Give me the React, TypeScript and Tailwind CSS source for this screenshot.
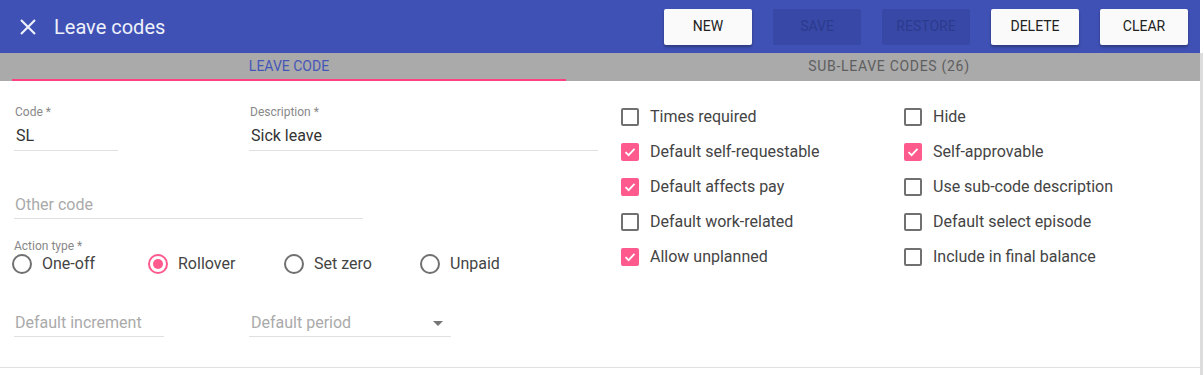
import React from "react";

const font = { fontFamily: "Roboto, 'Noto Sans', sans-serif" };

function Checkbox({ checked, label }: { checked?: boolean; label: string }) {
  return (
    <div className="flex items-center h-[35px]">
      {checked ? (
        <div className="w-[18px] h-[18px] rounded-[2px] bg-[#ff5a8e] flex items-center justify-center">
          <svg width="14" height="14" viewBox="0 0 14 14">
            <path d="M2.5 7.2 L5.6 10.2 L11.5 3.8" fill="none" stroke="#ffffff" strokeWidth="1.8" />
          </svg>
        </div>
      ) : (
        <div className="w-[18px] h-[18px] rounded-[2px] border-2 border-[#707070] bg-white" />
      )}
      <span className="ml-[11px] text-[16px] leading-[20px] text-[#444444]">{label}</span>
    </div>
  );
}

function Radio({ checked, label }: { checked?: boolean; label: string }) {
  return (
    <div className="flex items-center w-[136px] h-[20px]">
      {checked ? (
        <div className="w-[20px] h-[20px] rounded-full border-2 border-[#ff5a8e] flex items-center justify-center">
          <div className="w-[10px] h-[10px] rounded-full bg-[#ff5a8e]" />
        </div>
      ) : (
        <div className="w-[20px] h-[20px] rounded-full border-2 border-[#707070]" />
      )}
      <span className="ml-[10px] text-[16px] leading-[20px] text-[#444444]">{label}</span>
    </div>
  );
}

function Btn({ label, disabled }: { label: string; disabled?: boolean }) {
  return (
    <div
      className={
        disabled
          ? "w-[88px] h-[36px] rounded-[2px] bg-[#3848a6] text-[#2c3b8e] flex items-center justify-center text-[14px]"
          : "w-[88px] h-[36px] rounded-[2px] bg-[#fafafa] text-[#212121] flex items-center justify-center text-[14px] shadow-[0_2px_3px_rgba(0,0,0,0.3)]"
      }
    >
      {label}
    </div>
  );
}

export default function App() {
  return (
    <div className="w-[1204px] h-[375px] bg-white flex overflow-hidden" style={font}>
      <div className="w-[1200px] flex flex-col">
        {/* Header */}
        <div className="h-[53px] bg-[#3f51b5] flex items-center">
          <svg className="ml-[20px]" width="16" height="16" viewBox="0 0 16 16">
            <path d="M1 1 L15 15 M15 1 L1 15" stroke="#eef0fa" strokeWidth="2.2" />
          </svg>
          <span className="ml-[18px] text-[20px] leading-[24px] text-[#eef0fa]">Leave codes</span>
          <div className="ml-auto mr-[12px] flex gap-[21px]">
            <Btn label="NEW" />
            <Btn label="SAVE" disabled />
            <Btn label="RESTORE" disabled />
            <Btn label="DELETE" />
            <Btn label="CLEAR" />
          </div>
        </div>
        {/* Tabs */}
        <div className="h-[28px] bg-[#aaaaaa] flex pl-[12px] overflow-hidden">
          <div className="w-[554px] shrink-0 h-full flex items-center justify-center border-b-2 border-[#ff4081] text-[14px] text-[#4656b8]">
            <span className="mt-[1px]">LEAVE CODE</span>
          </div>
          <div className="w-[646px] shrink-0 h-full flex items-center justify-center text-[14px] text-[#5e5e5e] tracking-[0.7px]">
            <span className="-mt-[1px]">SUB-LEAVE CODES (26)</span>
          </div>
        </div>
        {/* Form */}
        <div className="h-[287px] border-b border-[#e0e0e0] flex">
          <div className="w-[621px] pl-[14px] flex flex-col">
            <div className="mt-[24px] flex">
              <div className="w-[235px]">
                <div className="w-[104px] border-b border-[#e0e0e0]">
                  <div className="text-[12px] leading-[14px] text-[#888888] pl-[1px]">Code *</div>
                  <div className="pt-[7px] h-[31px] text-[16px] leading-[20px] text-[#333333] pl-[2px]">SL</div>
                </div>
              </div>
              <div className="w-[349px] border-b border-[#e0e0e0]">
                <div className="text-[12px] leading-[14px] text-[#888888] pl-[1px]">Description *</div>
                <div className="pt-[7px] h-[31px] text-[16px] leading-[20px] text-[#333333] pl-[2px]">Sick leave</div>
              </div>
            </div>
            <div className="mt-[44px] w-[349px] border-b border-[#e0e0e0] pb-[3px] text-[16px] leading-[20px] text-[#aaaaaa] pl-[1px]">
              Other code
            </div>
            <div className="mt-[20px] text-[12px] leading-[14px] text-[#888888]">Action type *</div>
            <div className="mt-[1px] -ml-[2px] flex">
              <Radio label="One-off" />
              <Radio label="Rollover" checked />
              <Radio label="Set zero" />
              <Radio label="Unpaid" />
            </div>
            <div className="mt-[39px] flex">
              <div className="w-[235px]">
                <div className="w-[150px] border-b border-[#e0e0e0] pb-[3px] text-[16px] leading-[20px] text-[#aaaaaa] pl-[1px]">
                  Default increment
                </div>
              </div>
              <div className="w-[202px] border-b border-[#e0e0e0] pb-[3px] text-[16px] leading-[20px] text-[#aaaaaa] pl-[2px] flex items-center">
                <span>Default period</span>
                <svg className="ml-auto mr-[8px]" width="10" height="5" viewBox="0 0 10 5">
                  <path d="M0 0 L10 0 L5 5 Z" fill="#757575" />
                </svg>
              </div>
            </div>
          </div>
          <div className="pt-[18px] flex">
            <div className="w-[283px] flex flex-col">
              <Checkbox label="Times required" />
              <Checkbox label="Default self-requestable" checked />
              <Checkbox label="Default affects pay" checked />
              <Checkbox label="Default work-related" />
              <Checkbox label="Allow unplanned" checked />
            </div>
            <div className="flex flex-col">
              <Checkbox label="Hide" />
              <Checkbox label="Self-approvable" checked />
              <Checkbox label="Use sub-code description" />
              <Checkbox label="Default select episode" />
              <Checkbox label="Include in final balance" />
            </div>
          </div>
        </div>
        <div className="flex-1" />
      </div>
      <div className="w-[4px] flex flex-col">
        <div className="h-[53px] bg-white" />
        <div className="flex-1 bg-[#dcdcdc] w-[3px]" />
      </div>
    </div>
  );
}
